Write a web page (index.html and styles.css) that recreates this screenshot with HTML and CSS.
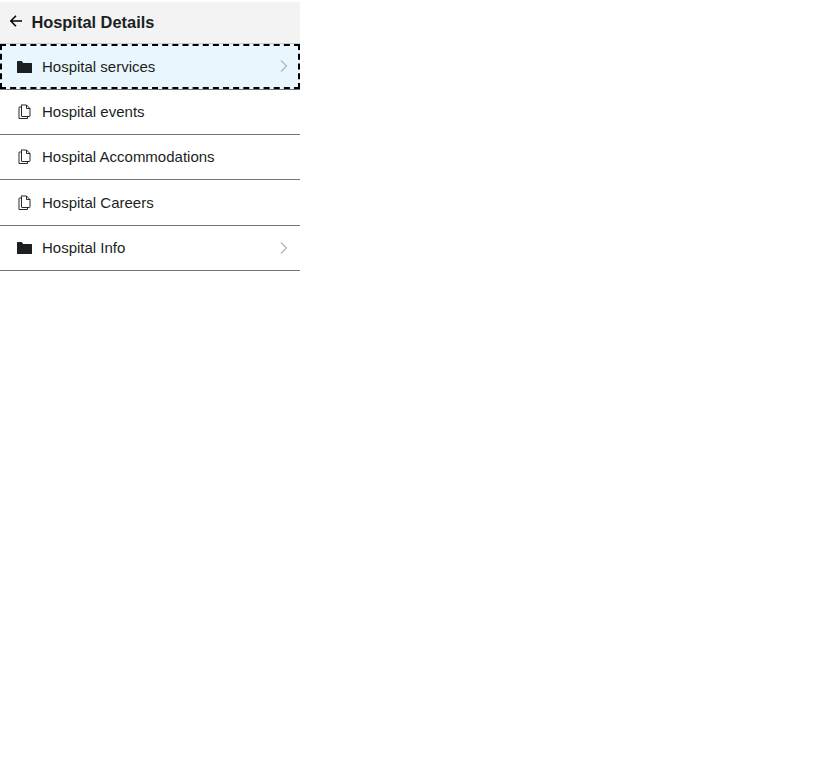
FILE: index.html
```html
<!DOCTYPE html>
<html lang="en">
<head>
<meta charset="utf-8">
<title>Hospital Details</title>
<link rel="stylesheet" href="styles.css">
</head>
<body>
<svg class="defs" aria-hidden="true">
  <symbol id="folder" viewBox="0 0 16 16"><path fill="currentColor" d="M1.500 2H5.700L7.200 3.900H15.500q.5 0 .5.600v9q0 .5-.5.500h-14Q1 14 1 13.500v-11Q1 2 1.500 2z"/></symbol>
  <symbol id="files" viewBox="0 0 16 16"><path fill="none" stroke="currentColor" stroke-width=".95" d="M5.500 1H10.500l3.500 3.500v7.500q0 .500-.500.500H6Q5.500 12.500 5.500 12V1.500Q5.500 1 6 1zM10.500 1v3.500H14M5.500 3H3.500q-.500 0-.500.500v11h8.500V12.500"/></symbol>
  <symbol id="chevron" viewBox="0 0 16 16"><path fill="none" stroke="currentColor" stroke-width="1.400" d="M5 2.500l5.500 5.500L5 13.500"/></symbol>
</svg>
<nav class="menu">
  <header class="menu-header">
    <svg class="back" viewBox="0 0 16 16"><path fill="none" stroke="currentColor" stroke-width="1.500" d="M14 8H3M8 2.800L2.800 8 8 13.200"/></svg>
    <h1>Hospital Details</h1>
  </header>
  <ul>
    <li class="item"><a class="link focused"><svg class="icon"><use href="#folder"/></svg><span>Hospital services</span><svg class="chevron"><use href="#chevron"/></svg></a></li>
    <li class="item"><a class="link"><svg class="icon"><use href="#files"/></svg><span>Hospital events</span></a></li>
    <li class="item"><a class="link"><svg class="icon"><use href="#files"/></svg><span>Hospital Accommodations</span></a></li>
    <li class="item"><a class="link"><svg class="icon"><use href="#files"/></svg><span>Hospital Careers</span></a></li>
    <li class="item"><a class="link"><svg class="icon"><use href="#folder"/></svg><span>Hospital Info</span><svg class="chevron"><use href="#chevron"/></svg></a></li>
  </ul>
</nav>
</body>
</html>
```
FILE: styles.css
```css
* { box-sizing: border-box; }
body { margin: 0; background: #fff; color: #1b1f22; font: 15px/22px "Liberation Sans", Arial, sans-serif; }
.defs { display: none; }
.menu { width: 300px; padding-top: 2px; }
.menu-header { display: flex; align-items: center; height: 42.400px; padding: 0 0 1px 8px; background: #f3f3f3; border-bottom: 1px solid #ccc; }
.back { width: 16px; height: 16px; margin: -2px 7.400px 0 0; color: #000; }
h1 { margin: 0; font-size: 16.400px; line-height: 24px; }
ul { margin: 0; padding: 0; list-style: none; }
.item { height: 45.300px; border-bottom: 1px solid #707477; }
.link { display: flex; align-items: center; height: 100%; padding: 0.200px 8px 0 16px; }
.focused { background: #eaf6fd; outline: 2px dashed #000; outline-offset: -2px; }
.icon { width: 16px; height: 16px; margin-right: 10px; }
.chevron { width: 16px; height: 16px; margin: -0.300px 0 0 auto; color: #b8b8b8; }
```
